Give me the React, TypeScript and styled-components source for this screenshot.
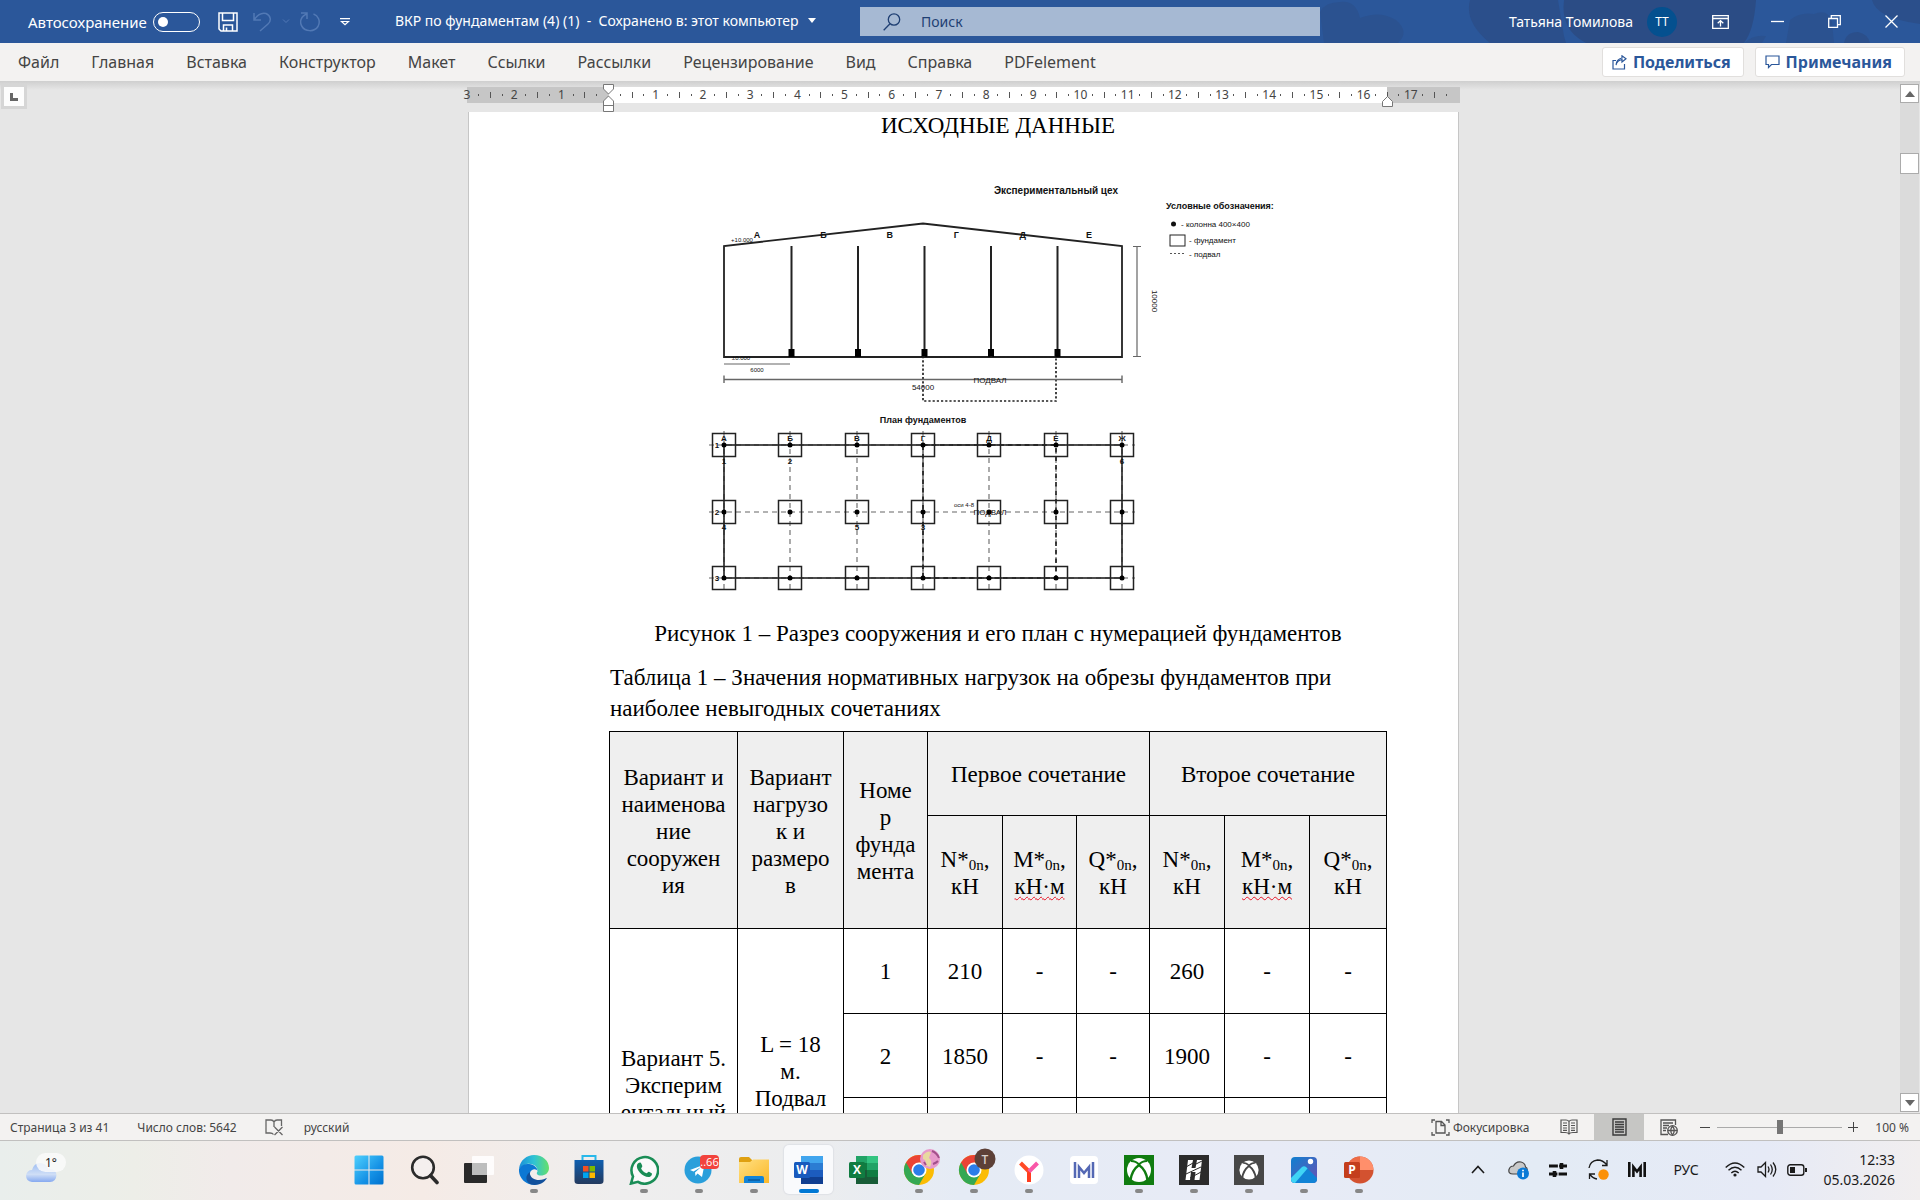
import React from "react";
import styled, { createGlobalStyle } from "styled-components";

const UI = `"Noto Sans", "Segoe UI", sans-serif`;
const SERIF = `"Liberation Serif", "Times New Roman", serif`;
const BLUE = "#2b579a";

const Global = createGlobalStyle`
  *, *::before, *::after { box-sizing: border-box; }
  html, body { margin: 0; height: 100%; overflow: hidden; }
  body { font-family: ${UI}; background: #e6e6e6; }
  button, input { font: inherit; color: inherit; margin: 0; }
  svg { display: block; flex: none; }
`;

const Screen = styled.div`
  display: flex;
  flex-direction: column;
  height: 100vh;
`;

/* ---------- title bar ---------- */

const TitleBar = styled.header`
  display: grid;
  grid-template-columns: minmax(0, 43fr) minmax(0, 23fr) minmax(0, 30fr);
  flex: none;
  height: 43px;
  background: ${BLUE};
  color: #fff;
  font-size: 14px;
`;

const PlainButton = styled.button`
  display: flex;
  align-items: center;
  justify-content: center;
  padding: 0;
  border: 0;
  background: none;
`;

const QuickAccess = styled.div`
  display: flex;
  align-items: center;
  padding-left: 28px;
  white-space: nowrap;
`;

const AutoSave = styled.label`
  display: flex;
  align-items: center;
  gap: 6px;
  margin-right: 18px;
  font-size: 15px;
  line-height: 20px;
`;

const Switch = styled.input`
  appearance: none;
  display: flex;
  align-items: center;
  width: 47px;
  height: 20px;
  padding-left: 4px;
  border: 1px solid #fff;
  border-radius: 10px;
  &::before {
    content: "";
    width: 10px;
    height: 10px;
    border-radius: 50%;
    background: #fff;
  }
`;

const History = styled.div`
  display: flex;
  align-items: center;
  gap: 10px;
  margin: 0 20px 0 14px;
`;

const DocName = styled.button`
  display: flex;
  align-items: center;
  gap: 9px;
  margin-left: 45px;
  padding: 0 0 2px;
  border: 0;
  background: none;
  white-space: pre;
  line-height: 20px;
`;

const SearchBox = styled.label`
  display: flex;
  align-items: center;
  gap: 20px;
  height: 29px;
  margin-top: 7px;
  padding-left: 23px;
  background: #a6b9d3;
  color: #1f3f73;
`;

const SearchInput = styled.input`
  flex: 1;
  min-width: 0;
  padding: 0;
  border: 0;
  outline: 0;
  background: none;
  &::placeholder { color: #1f3f73; opacity: 1; }
`;

const Account = styled.div`
  position: relative;
  display: flex;
  align-items: center;
  justify-content: flex-end;
  overflow: hidden;
`;

const Pattern = styled.svg`
  position: absolute;
  top: 0;
  right: 0;
`;

const UserButton = styled.button`
  position: relative;
  display: flex;
  align-items: center;
  gap: 14px;
  margin-right: 15px;
  padding: 0;
  border: 0;
  background: none;
`;

const Avatar = styled.span`
  width: 30px;
  height: 30px;
  border-radius: 50%;
  background: #04508f;
  font-size: 12px;
  line-height: 30px;
  text-align: center;
`;

const WindowButton = styled(PlainButton)`
  position: relative;
  width: 57px;
  height: 43px;
`;

/* ---------- ribbon tabs ---------- */

const TabBar = styled.nav`
  display: flex;
  align-items: center;
  flex: none;
  height: 38px;
  padding: 0 15px 0 2px;
  background: #f3f2f1;
`;

const Tab = styled.button`
  padding: 0 16px 1px;
  border: 0;
  background: none;
  color: #444;
  font-size: 16px;
  line-height: 24px;
  white-space: nowrap;
`;

const Spacer = styled.div`
  flex: 1;
`;

const RibbonAction = styled.button`
  display: flex;
  align-items: center;
  gap: 6px;
  height: 30px;
  margin-left: 11px;
  padding: 0 12px 0 9px;
  border: 1px solid #e1dfdd;
  border-radius: 3px;
  background: #fff;
  color: ${BLUE};
  font-size: 16px;
  font-weight: 700;
  line-height: 24px;
`;

/* ---------- document area ---------- */

const Workspace = styled.div`
  display: flex;
  flex: 1;
  min-height: 0;
  background: linear-gradient(#cfcfcf, #e6e6e6 9px);
`;

const SideRuler = styled.div`
  flex: none;
  width: 27px;
  padding: 3px 0 0 1px;
`;

const TabStop = styled(PlainButton)`
  width: 26px;
  height: 25px;
  border: 3px solid #d6d6d6;
  background: #fdfdfd;
`;

const DocColumn = styled.main`
  display: flex;
  flex: 1;
  flex-direction: column;
  align-items: center;
  min-width: 0;
  overflow: hidden;
`;

const Ruler = styled.div`
  position: relative;
  display: flex;
  flex: none;
  align-items: center;
  justify-content: space-between;
  width: 993px;
  height: 16px;
  margin: 6px 0 9px;
  padding-right: 2px;
  background: linear-gradient(90deg, #c6c6c6 142px, #fff 142px, #fff 920px, #c6c6c6 920px);
  color: #444;
  font-size: 12px;
  line-height: 16px;
`;

const Mark = styled.span<{ $kind: "dot" | "tick" | "num" | "none" }>`
  display: flex;
  justify-content: center;
  width: 0;
  &::before {
    content: "";
    flex: none;
    width: ${(p) => (p.$kind === "dot" || p.$kind === "tick" ? 1 : 0)}px;
    height: ${(p) => (p.$kind === "tick" ? 6 : 2)}px;
    background: #555;
  }
`;

const Indent = styled.svg<{ $x: number; $y: number }>`
  position: absolute;
  left: ${(p) => p.$x}px;
  top: ${(p) => p.$y}px;
`;

const Sheet = styled.article`
  flex: none;
  width: 991px;
  padding: 0 71px 0 140px;
  border: solid #c6c6c6;
  border-width: 0 1px;
  background: #fff;
  color: #000;
  font-family: ${SERIF};
  font-size: 23px;
  line-height: 31px;
`;

const Heading = styled.h1`
  margin: 0;
  font-size: 23px;
  font-weight: 400;
  line-height: 27px;
  text-align: center;
`;

const Figure = styled.figure`
  margin: 0 0 13px;
  text-align: center;
  svg { width: 100%; height: auto; }
`;

const Loads = styled.table`
  width: 100%;
  border-collapse: collapse;
  table-layout: fixed;
  line-height: 27px;
  text-align: center;
  caption {
    padding: 0 0 7px 1px;
    line-height: 31px;
    text-align: left;
  }
`;

const Row = styled.tr<{ $h: number }>`
  height: ${(p) => p.$h}px;
`;

const Head = styled.th`
  padding: 2px 0 0;
  border: 1px solid #000;
  background: #efefef;
  font-weight: 400;
  sub {
    font-size: 15px;
    line-height: 0;
    vertical-align: -3px;
  }
`;

const Cell = styled.td`
  padding: 1px 0 0;
  border: 1px solid #000;
`;

const Misspelt = styled.span`
  text-decoration: underline wavy #e81123 1px;
  text-underline-offset: 2px;
  text-decoration-skip-ink: none;
`;

const ScrollBar = styled.div`
  display: flex;
  flex: none;
  flex-direction: column;
  width: 20px;
  padding: 3px 1px 1px 0;
`;

const ScrollButton = styled(PlainButton)`
  width: 19px;
  height: 19px;
  border: 1px solid #ababab;
  background: #fff;
`;

const ScrollTrack = styled.div`
  flex: 1;
  padding-top: 50px;
  background: #dbdbdb;
`;

const ScrollThumb = styled.div`
  height: 21px;
  border: 1px solid #ababab;
  background: #fff;
`;

/* ---------- status bar ---------- */

const StatusBar = styled.footer`
  display: flex;
  align-items: center;
  flex: none;
  height: 28px;
  padding: 0 11px 0 10px;
  border: solid #c1c0bf;
  border-width: 1px 0;
  background: #f3f2f1;
  color: #444;
  font-size: 12px;
  white-space: nowrap;
`;

const StatusItem = styled.button<{ $gap?: number }>`
  display: flex;
  align-items: center;
  gap: 3px;
  margin-right: ${(p) => p.$gap ?? 28}px;
  padding: 0;
  border: 0;
  background: none;
`;

const ZoomValue = styled.button`
  margin-left: 17px;
  padding: 0;
  border: 0;
  background: none;
`;

const ViewButton = styled(PlainButton)<{ $on?: boolean }>`
  width: 50px;
  height: 26px;
  background: ${(p) => (p.$on ? "#c6c6c4" : "none")};
`;

const ZoomRange = styled.input`
  appearance: none;
  width: 125px;
  height: 14px;
  margin: 0 6px;
  background: linear-gradient(#aaa, #aaa) center / 100% 1px no-repeat;
  &::-webkit-slider-thumb {
    appearance: none;
    width: 6px;
    height: 14px;
    background: #757575;
  }
`;

/* ---------- taskbar ---------- */

const TaskBar = styled.footer`
  display: flex;
  align-items: center;
  flex: none;
  height: 59px;
  padding: 0 25px 2px 0;
  background: linear-gradient(90deg, #e9eeec, #edeee8 7%, #f1ebea 12%, #f5ebe6 22%, #efeeee 32%, #ecedee 42%, #e5ebf5 50%, #e8ebf6 66%, #e3ebf5 80%, #e6eaf6 92%, #f1eeef);
  color: #1b1b1b;
  font-size: 14px;
`;

const Weather = styled(PlainButton)`
  width: 92px;
  height: 50px;
`;

const Apps = styled.div`
  display: flex;
  align-items: center;
  margin-left: 249px;
`;

const AppButton = styled.button<{ $state?: "open" | "active" }>`
  display: flex;
  flex-direction: column;
  align-items: center;
  width: ${(p) => (p.$state === "active" ? 49 : 55)}px;
  height: 49px;
  margin: ${(p) => (p.$state === "active" ? "0 3px" : "0")};
  padding: 10px 0 0;
  border: 0;
  border-radius: 5px;
  background: ${(p) => (p.$state === "active" ? "#f9fafc" : "none")};
  box-shadow: ${(p) => (p.$state === "active" ? "0 0 1px 1px #dfe1e6" : "none")};
  &::after {
    content: "";
    width: ${(p) => (p.$state === "active" ? 20 : 8)}px;
    height: 4px;
    margin-top: 4px;
    border-radius: 2px;
    background: ${(p) => (p.$state === "active" ? "#0078d4" : p.$state ? "#878787" : "none")};
  }
`;

const Tray = styled.div`
  display: flex;
  align-items: center;
`;

const TrayButton = styled(PlainButton)<{ $w: number }>`
  width: ${(p) => p.$w}px;
  height: 40px;
`;

const Clock = styled.button`
  width: 81px;
  padding: 0;
  border: 0;
  background: none;
  line-height: 20px;
  text-align: right;
`;

/* ---------- drawing of the building ---------- */

const AXES = [724, 790, 857, 923, 989, 1056, 1122];
const ROWS = [445, 512, 578];
const BAYS = ["А", "Б", "В", "Г", "Д", "Е"];

function BuildingDrawing() {
  return (
    <svg viewBox="609 139 778 479" fontFamily="Liberation Sans, Arial, sans-serif" fill="none" stroke="#222">
      <path d="M724 357V246L923 223.500L1122 246V357Z" strokeWidth="1.800" />
      <path d="M791.500 246V357M858 246V357M924.500 246V357M991 246V357M1057.500 246V357" strokeWidth="2" />
      {[791.5, 858, 924.5, 991, 1057.5].map((x) => (
        <rect key={x} x={x - 3} y="349" width="6" height="8" fill="#000" stroke="none" />
      ))}
      <path d="M923 357H1056V401H923Z" strokeWidth="1.700" strokeDasharray="2.200 2" />
      <g stroke="#666">
        <path d="M724 364H790M1137 246V357M1133 246.500H1141M1133 356.500H1141" strokeWidth="1.200" />
        <path d="M724 379.500H1122M724 375.500V383M1122 375.500V383" strokeWidth="1.400" />
      </g>
      <g fill="#111" stroke="none" textAnchor="middle">
        {BAYS.map((l, i) => (
          <text key={l} x={757 + i * 66.4} y="238" fontSize="9" fontWeight="700">{l}</text>
        ))}
        <text x="742" y="242" fontSize="6">+10.000</text>
        <text x="741" y="360" fontSize="6">±0.000</text>
        <text x="757" y="372" fontSize="6">6000</text>
        <text x="990" y="383" fontSize="8">ПОДВАЛ</text>
        <text x="923" y="390" fontSize="8">54000</text>
        <text transform="translate(1152 301) rotate(90)" fontSize="8">10000</text>
        <text x="1056" y="194" fontSize="10" fontWeight="700">Экспериментальный цех</text>
        <text x="923" y="423" fontSize="9" fontWeight="700">План фундаментов</text>
      </g>
      <g fill="#111" stroke="none" fontSize="8">
        <text x="1166" y="209" fontSize="9" fontWeight="700">Условные обозначения:</text>
        <circle cx="1173.500" cy="224" r="2.500" />
        <text x="1181" y="227">- колонна 400×400</text>
        <text x="1189" y="243">- фундамент</text>
        <text x="1189" y="257">- подвал</text>
      </g>
      <rect x="1170" y="235" width="15" height="11" strokeWidth="1" />
      <path d="M1170 253.500H1185" strokeDasharray="2 2" stroke="#555" />

      <g stroke="#666" strokeWidth="1.100" strokeDasharray="5 4">
        {AXES.map((x) => <path key={x} d={`M${x} 431V590`} />)}
        {ROWS.map((y) => <path key={y} d={`M709 ${y}H1135`} />)}
      </g>
      <rect x="724" y="445" width="398" height="133" strokeWidth="1.600" />
      <path d="M923 445V578" stroke="#777" strokeWidth="1.400" />
      <path d="M923 445H1056V578H923Z" strokeWidth="1.700" strokeDasharray="4.500 4" />
      {ROWS.map((y) => AXES.map((x) => (
        <g key={`${x}-${y}`}>
          <rect x={x - 11.5} y={y - 11.5} width="23" height="23" strokeWidth="1.500" />
          <circle cx={x} cy={y} r="2.500" fill="#000" stroke="none" />
        </g>
      )))}
      <g fill="#111" stroke="none" fontSize="8" fontWeight="700" textAnchor="middle">
        {[...BAYS, "Ж"].map((l, i) => <text key={l} x={AXES[i]} y="441">{l}</text>)}
        {ROWS.map((y, i) => <text key={y} x="717" y={y + 3}>{i + 1}</text>)}
        <text x="724" y="464">1</text>
        <text x="790" y="464">2</text>
        <text x="1122" y="464">6</text>
        <text x="724" y="530">4</text>
        <text x="857" y="530">5</text>
        <text x="923" y="530">3</text>
        <text x="964" y="507" fontSize="6" fontWeight="400">оси 4-8</text>
        <text x="990" y="515" fontWeight="400">ПОДВАЛ</text>
      </g>
    </svg>
  );
}

/* ---------- application icons ---------- */

function OfficeIcon({ letter, tile, bands }: { letter: string; tile: string; bands: string[] }) {
  return (
    <svg width="30" height="30" viewBox="0 0 30 30">
      {bands.map((c, i) => <rect key={c} x="7" y={1 + i * 7} width="22" height="7" fill={c} />)}
      <rect x="0" y="7" width="16" height="16" rx="1.500" fill={tile} />
      <text x="8" y="19" fill="#fff" fontFamily="Open Sans, sans-serif" fontSize="12" fontWeight="700" textAnchor="middle">{letter}</text>
    </svg>
  );
}

const ExcelIcon = () => (
  <svg width="30" height="30" viewBox="0 0 30 30">
    <path fill="#21a366" d="M7 1h11v7H7z" /><path fill="#33c481" d="M18 1h11v7H18z" />
    <path fill="#107c41" d="M7 8h11v7H7z" /><path fill="#21a366" d="M18 8h11v7H18z" />
    <path fill="#185c37" d="M7 15h11v14H7z" /><path fill="#107c41" d="M18 15h11v7H18z" /><path fill="#185c37" d="M18 22h11v7H18z" />
    <rect y="7" width="16" height="16" rx="1.500" fill="#107c41" />
    <text x="8" y="19" fill="#fff" fontFamily="Open Sans, sans-serif" fontSize="12" fontWeight="700" textAnchor="middle">X</text>
  </svg>
);

const PowerPointIcon = () => (
  <svg width="30" height="30" viewBox="0 0 30 30">
    <circle cx="16" cy="15" r="13.500" fill="#d35230" />
    <path d="M16 1.500A13.500 13.500 0 0 1 29.500 15H16Z" fill="#ff8f6b" />
    <path d="M16 1.500A13.500 13.500 0 0 0 2.500 15H16Z" fill="#ed6c47" />
    <rect y="7" width="16" height="16" rx="1.500" fill="#c43e1c" />
    <text x="8" y="19" fill="#fff" fontFamily="Open Sans, sans-serif" fontSize="12" fontWeight="700" textAnchor="middle">P</text>
  </svg>
);

function ChromeIcon({ children }: { children: React.ReactNode }) {
  return (
    <svg width="36" height="30" viewBox="-3 0 36 30" overflow="visible">
      <circle cx="15" cy="15" r="15" fill="#fbbc04" />
      <path d="M15 15L2 7.500A15 15 0 0 0 15 30L21.500 18.700Z" fill="#34a853" />
      <path d="M15 15L8.500 18.800L2 7.500A15 15 0 0 1 28 7.500H15Z" fill="#ea4335" />
      <circle cx="15" cy="15" r="7.500" fill="#fff" />
      <circle cx="15" cy="15" r="5.800" fill="#2b7de9" />
      {children}
    </svg>
  );
}

function XboxIcon({ bg, r }: { bg: string; r: number }) {
  return (
    <svg width="30" height="30" viewBox="0 0 30 30">
      <rect width="30" height="30" fill={bg} />
      <circle cx="15" cy="15" r={r} fill="#fff" />
      <g transform={`translate(15 15) scale(${r / 12})`} stroke={bg} fill="none">
        <path d="M-8 -9Q-3 -9 0 -5.500Q3 -9 8 -9" strokeWidth="2" />
        <path d="M0 -5Q-7 0 -8.500 10M0 -5Q7 0 8.500 10" strokeWidth="2.400" />
      </g>
    </svg>
  );
}

const icons: { name: string; state?: "open" | "active"; icon: React.ReactNode }[] = [
  {
    name: "Пуск",
    icon: (
      <svg width="30" height="30" viewBox="0 0 30 30">
        <defs><linearGradient id="win" x1="0" y1="0" x2="1" y2="1"><stop stopColor="#4fd0fd" /><stop offset=".6" stopColor="#1592e6" /><stop offset="1" stopColor="#0071cf" /></linearGradient></defs>
        <path fill="url(#win)" d="M2 .5H14.500V14.500H.5V2Q.5 .5 2 .5ZM15.500 .5H28Q29.500 .5 29.500 2V14.500H15.500ZM.5 15.500H14.500V29.500H2Q.5 29.500 .5 28ZM15.500 15.500H29.500V28Q29.500 29.500 28 29.500H15.500Z" />
      </svg>
    ),
  },
  {
    name: "Поиск",
    icon: (
      <svg width="30" height="30" viewBox="0 0 30 30" fill="none" stroke="#2b2b2b">
        <circle cx="14" cy="12.500" r="10.800" strokeWidth="2.600" fill="#f4efee" />
        <path d="M21.500 20.500L28 27.500" strokeWidth="3.600" strokeLinecap="round" />
      </svg>
    ),
  },
  {
    name: "Представление задач",
    icon: (
      <svg width="30" height="30" viewBox="0 0 30 30">
        <rect x="0" y="8" width="23" height="20" rx="1" fill="#2a2a2a" />
        <rect x="8" y="1" width="22" height="19" rx="1" fill="#fff" opacity=".85" />
        <path d="M8 8H23V20H8Z" fill="#bdbdbd" />
      </svg>
    ),
  },
  {
    name: "Edge",
    state: "open",
    icon: (
      <svg width="30" height="30" viewBox="0 0 30 30">
        <defs>
          <linearGradient id="edgeTop" x1="0" x2="1"><stop stopColor="#1b8fd9" /><stop offset=".5" stopColor="#2fc3d4" /><stop offset="1" stopColor="#66e06a" /></linearGradient>
        </defs>
        <path d="M0 14C1 5 8 0 15 0C24 0 30 6 30 13C30 18 26 20.500 22 20.500C18 20.500 17 18.500 18.500 16.500C19 11 13 8 8 9C4 10 1.500 12 0 14Z" fill="url(#edgeTop)" />
        <path d="M0 14C2 10 6 8.500 10 9C15 9.500 18.500 12.500 18.500 16C18 13.500 12 13 11 18C10.500 24 16 28 22 27C19 30 14 30.500 10 29C3 26.500 -.5 20 0 14Z" fill="#0c78d4" />
        <path d="M11 17C10 22 15 25 20 25C24 25 26 23.500 28 23C25 28.500 18 31 12 29.500C6 27 6 20 11 17Z" fill="#12509b" />
      </svg>
    ),
  },
  {
    name: "Microsoft Store",
    icon: (
      <svg width="30" height="30" viewBox="0 0 30 30">
        <defs><linearGradient id="store" y1="0" x1="0" x2="0" y2="1"><stop stopColor="#0f5fb0" /><stop offset="1" stopColor="#243a5e" /></linearGradient></defs>
        <path d="M8.500 6V1H21.500V6" fill="none" stroke="#28b8ea" strokeWidth="2" />
        <path d="M.5 5H29.500V26Q29.500 29 26 29H4Q.5 29 .5 26Z" fill="url(#store)" />
        <path fill="#f25022" d="M9 11h5.500v5.500H9z" /><path fill="#7fba00" d="M15.500 11H21v5.500h-5.500z" />
        <path fill="#00a4ef" d="M9 17.500h5.500V23H9z" /><path fill="#ffb900" d="M15.500 17.500H21V23h-5.500z" />
      </svg>
    ),
  },
  {
    name: "WhatsApp",
    state: "open",
    icon: (
      <svg width="30" height="30" viewBox="0 0 30 30">
        <path d="M2 28.500L4 21.500A13.300 13.300 0 1 1 9 26.800Z" fill="#fafafa" stroke="#1a8d56" strokeWidth="2.600" />
        <path d="M9.500 8C11 7 12 7.500 12.500 9L13.300 11C13.500 12 12 13 12.200 13.700C13.500 16 15 17.500 17.500 18.300C18.300 18.300 19 16.500 20 16.800L22.700 18.200C23.500 19 22.500 21.500 20.500 22C14.500 23 6.500 14.500 8 10Q8.500 8.500 9.500 8Z" fill="#1a8d56" />
      </svg>
    ),
  },
  {
    name: "Telegram",
    state: "open",
    icon: (
      <svg width="30" height="30" viewBox="0 0 30 30" overflow="visible">
        <circle cx="14" cy="15" r="13.500" fill="#2a9fdb" />
        <path d="M6 15L20.500 9.500L18 22L13.500 18.500L11.500 21L11 17.500L17 12L9.500 16.500Z" fill="#fff" />
        <rect x="16" y="0" width="19" height="14" rx="4" fill="#f2433d" />
        <text x="25.500" y="11" fill="#fff" fontFamily="Open Sans, sans-serif" fontSize="11" textAnchor="middle">..66</text>
      </svg>
    ),
  },
  {
    name: "Проводник",
    state: "open",
    icon: (
      <svg width="30" height="30" viewBox="0 0 30 30">
        <defs><linearGradient id="folder" x1="0" y1="0" x2="1" y2="1"><stop stopColor="#ffe082" /><stop offset="1" stopColor="#fbb829" /></linearGradient></defs>
        <path d="M0 4Q0 2 2 2H10L13 5V9H0Z" fill="#dfa011" />
        <path d="M0 7H11L14 4.500H30V28H0Z" fill="url(#folder)" />
        <path d="M5 28V23Q5 21 7 21H23Q25 21 25 23V28Z" fill="#1384d8" />
        <path d="M9 25H21" stroke="#0b5a9d" strokeWidth="1.500" />
      </svg>
    ),
  },
  { name: "Word", state: "active", icon: <OfficeIcon letter="W" tile="#185abd" bands={["#41a5ee", "#2b7cd3", "#1c5cbe", "#103f91"]} /> },
  { name: "Excel", icon: <ExcelIcon /> },
  {
    name: "Chrome",
    state: "open",
    icon: (
      <ChromeIcon>
        <circle cx="26" cy="4" r="10" fill="#e79acb" />
        <path d="M19 0Q23 -5 27 -3L25 3Q29 6 26 12L21 10Q23 5 19 4Z" fill="#e8d9a0" />
        <path d="M28 -4Q33 -2 35 3M29 9Q32 8 34 6M20 7L22 10" stroke="#a2508b" strokeWidth="2" fill="none" />
      </ChromeIcon>
    ),
  },
  {
    name: "Chrome, профиль Т",
    state: "open",
    icon: (
      <ChromeIcon>
        <circle cx="26" cy="4" r="10.500" fill="#5d4037" />
        <text x="26" y="9" fill="#d8cfcb" fontFamily="Open Sans, sans-serif" fontSize="12" fontWeight="600" textAnchor="middle">T</text>
      </ChromeIcon>
    ),
  },
  {
    name: "Яндекс Браузер",
    state: "open",
    icon: (
      <svg width="30" height="30" viewBox="0 0 30 30">
        <circle cx="15" cy="15" r="14.500" fill="#fff" />
        <path d="M15 16V27" stroke="#ff3c1f" strokeWidth="4" />
        <path d="M6.500 8L15 16.500" stroke="#ff4a26" strokeWidth="4" />
        <path d="M23.500 8L15 16.500" stroke="#f957a8" strokeWidth="4" />
      </svg>
    ),
  },
  {
    name: "MAX",
    icon: (
      <svg width="30" height="30" viewBox="0 0 30 30">
        <rect x="1" y="1" width="28" height="28" rx="4" fill="#fff" />
        <path d="M6 7V23M24 7V23M10 23V12L15 18L20 12V23" stroke="#5468b4" strokeWidth="2.500" fill="none" />
      </svg>
    ),
  },
  { name: "Xbox", state: "open", icon: <XboxIcon bg="#107c10" r={12} /> },
  {
    name: "H",
    state: "open",
    icon: (
      <svg width="30" height="30" viewBox="0 0 30 30">
        <rect width="30" height="30" fill="#2b2b2b" />
        <path d="M9 5H14L12.500 13H16.500L18 5H23L20.500 25H15.500L16.500 17H12L11 25H6.500Z" fill="#fff" />
        <path d="M7 12L14 8M7 19L22 12M11 23L22 17M17 9L23 6" stroke="#2b2b2b" strokeWidth="1" />
      </svg>
    ),
  },
  { name: "Xbox Game Bar", state: "open", icon: <XboxIcon bg="#474747" r={9.6} /> },
  {
    name: "Фотографии",
    state: "open",
    icon: (
      <svg width="30" height="30" viewBox="0 0 30 30">
        <defs><linearGradient id="photo" x1="0" y1="0" x2="1" y2="1"><stop stopColor="#0f80d0" /><stop offset="1" stopColor="#6a52b4" /></linearGradient></defs>
        <rect x="2" y="2" width="26" height="26" rx="4" fill="url(#photo)" />
        <path d="M2 23L13 12Q15 10.500 17 12L28 23V24Q28 28 24 28H6Q2 28 2 24Z" fill="#1183d6" />
        <path d="M2 23L13 12Q15 10.500 17 12L18.500 13.500L6 28Q2 28 2 24Z" fill="#3fd4f5" />
        <circle cx="21.500" cy="6.500" r="2.700" fill="#fff" />
      </svg>
    ),
  },
  { name: "PowerPoint", state: "open", icon: <PowerPointIcon /> },
];

const tabs = ["Файл", "Главная", "Вставка", "Конструктор", "Макет", "Ссылки", "Рассылки", "Рецензирование", "Вид", "Справка", "PDFelement"];
const columns = [128, 106, 84, 75, 74, 73, 75, 85, 77];

function RulerMarks() {
  return (
    <>
      {Array.from({ length: 85 }, (_, i) => {
        const value = Math.abs(i / 4 - 3);
        if (i === 84 || i === 12) return <Mark key={i} $kind="none" />;
        if (i % 4 === 0) return <Mark key={i} $kind="num">{value}</Mark>;
        return <Mark key={i} $kind={i % 2 ? "dot" : "tick"} />;
      })}
    </>
  );
}

function Lines({ of }: { of: string[] }) {
  return <>{of.map((line, i) => <React.Fragment key={i}>{i > 0 && <br />}{line}</React.Fragment>)}</>;
}

function LoadHeads() {
  return (
    <>
      <Head scope="col">N*<sub>0n</sub>,<br />кН</Head>
      <Head scope="col">M*<sub>0n</sub>,<br /><Misspelt>кН·м</Misspelt></Head>
      <Head scope="col">Q*<sub>0n</sub>,<br />кН</Head>
    </>
  );
}

function ValueCells({ values }: { values: string[] }) {
  return <>{values.map((v, i) => <Cell key={i}>{v}</Cell>)}</>;
}

export default function App() {
  return (
    <Screen>
      <Global />
      <TitleBar>
        <QuickAccess>
          <AutoSave>
            Автосохранение
            <Switch type="checkbox" role="switch" />
          </AutoSave>
          <PlainButton aria-label="Сохранить">
            <svg width="20" height="20" viewBox="0 0 20 20" fill="none" stroke="#fff" strokeWidth="1.500">
              <path d="M1 1H19V19H3L1 17ZM4.500 1V8.500H15.500V1M5.500 19V13H14.500V19M8.500 15.500V19" />
            </svg>
          </PlainButton>
          <History>
            <PlainButton aria-label="Отменить">
              <svg width="20" height="20" viewBox="0 0 20 20" fill="none" stroke="#5279b5" strokeWidth="1.500">
                <path d="M2 1V8H9M2 8C6 2 10 .5 14 1.500C19 3.500 19.500 9 16 12L8 19" />
              </svg>
            </PlainButton>
            <PlainButton aria-label="Список отмены">
              <svg width="8" height="5" viewBox="0 0 8 5" fill="none" stroke="#5279b5"><path d="M1 .5L4 3.500L7 .5" /></svg>
            </PlainButton>
            <PlainButton aria-label="Повторить">
              <svg width="20" height="20" viewBox="0 0 20 20" fill="none" stroke="#5279b5" strokeWidth="1.500">
                <path d="M1 1H7V7M7 2C1 4 -1 10 2 14.500C5 19.500 14 20.500 18 14.500C21 9 18 3.500 13.500 2" />
              </svg>
            </PlainButton>
          </History>
          <PlainButton aria-label="Настройка панели">
            <svg width="10" height="8" viewBox="0 0 10 8" fill="none" stroke="#fff" strokeWidth="1.200"><path d="M0 .7H10M1.500 3.500H8.500L5 6.800Z" /></svg>
          </PlainButton>
          <DocName>
            {"ВКР по фундаментам (4) (1)  -  Сохранено в: этот компьютер"}
            <svg width="8" height="5" viewBox="0 0 8 5"><path d="M0 0H8L4 5Z" fill="#fff" /></svg>
          </DocName>
        </QuickAccess>
        <SearchBox>
          <svg width="18" height="18" viewBox="0 0 18 18" fill="none" stroke="#1f3f73" strokeWidth="1.300">
            <circle cx="11" cy="6.500" r="5.700" /><path d="M7 10.700L.7 17.300" />
          </svg>
          <SearchInput placeholder="Поиск" aria-label="Поиск" />
        </SearchBox>
        <Account>
          <Pattern width="600" height="43" viewBox="0 0 600 43" aria-hidden="true">
            <path d="M0 12Q5 2 20 2Q36 0 40 18Q60 10 76 20Q90 32 78 43H4Z" fill="#2b5290" />
            <path d="M150 0H238L244 36L246 43H170Q144 22 150 0Z" fill="#2b4f8b" />
            <path d="M244 0H436Q434 30 424 43H266Q240 30 244 0Z" fill="#2b4c85" />
            <path d="M424 43Q434 34 446 36L442 43ZM470 20Q480 12 494 14Q508 8 512 22L514 43H466Z" fill="#2b5290" />
            <path d="M524 43Q526 32 538 32Q548 34 550 43ZM552 0Q556 18 600 24V0Z" fill="#2b4f8b" />
          </Pattern>
          <UserButton>Татьяна Томилова<Avatar>ТТ</Avatar></UserButton>
          <WindowButton aria-label="Параметры отображения ленты">
            <svg width="17" height="14" viewBox="0 0 17 14" fill="none" stroke="#fff" strokeWidth="1.300"><path d="M.7 .7H16.300V13.300H.7ZM.7 3.500H16.300M8.500 11.500V6M5.700 8.200L8.500 5.600L11.300 8.200" /></svg>
          </WindowButton>
          <WindowButton aria-label="Свернуть">
            <svg width="13" height="13" viewBox="0 0 13 13" stroke="#fff" strokeWidth="1.300"><path d="M0 6.500H13" /></svg>
          </WindowButton>
          <WindowButton aria-label="Восстановить">
            <svg width="13" height="13" viewBox="0 0 13 13" fill="none" stroke="#fff" strokeWidth="1.300"><path d="M.7 3.500H9.500V12.300H.7ZM3.300 3.500V.7H12.300V9.700H9.500" /></svg>
          </WindowButton>
          <WindowButton aria-label="Закрыть">
            <svg width="13" height="13" viewBox="0 0 13 13" stroke="#fff" strokeWidth="1.300"><path d="M.5 .5L12.500 12.500M12.500 .5L.5 12.500" /></svg>
          </WindowButton>
        </Account>
      </TitleBar>

      <TabBar>
        {tabs.map((t) => <Tab key={t}>{t}</Tab>)}
        <Spacer />
        <RibbonAction>
          <svg width="15" height="15" viewBox="0 0 15 15" fill="none" stroke={BLUE} strokeWidth="1.200"><path d="M4 5.500H1V14H12.500V9M4 10Q5 5.500 10 4.500V7L14 3.700L10 .8V3Q4.500 4 4 10Z" /></svg>
          Поделиться
        </RibbonAction>
        <RibbonAction>
          <svg width="15" height="14" viewBox="0 0 15 14" fill="none" stroke={BLUE} strokeWidth="1.200"><path d="M1 1H14V9.500H6.500L3.500 12.500V9.500H1Z" /></svg>
          Примечания
        </RibbonAction>
      </TabBar>

      <Workspace>
        <SideRuler>
          <TabStop aria-label="Табуляция">
            <svg width="8" height="8" viewBox="0 0 8 8"><path d="M1.500 0V6.500H8" fill="none" stroke="#666" strokeWidth="3" /></svg>
          </TabStop>
        </SideRuler>
        <DocColumn>
          <Ruler>
            <RulerMarks />
            <Indent $x={136} $y={-3} width="11" height="28" viewBox="0 0 11 28" fill="#fff" stroke="#777">
              <path d="M.5 .5H10.500V5L5.500 10L.5 5ZM5.500 12L10.500 17V27.500H.5V17ZM.5 21.500H10.500" />
            </Indent>
            <Indent $x={915} $y={9} width="11" height="11" viewBox="0 0 11 11" fill="#fff" stroke="#777">
              <path d="M5.500 .5L10.500 5.500V10.500H.5V5.500Z" />
            </Indent>
          </Ruler>
          <Sheet>
            <Heading>ИСХОДНЫЕ ДАННЫЕ</Heading>
            <Figure>
              <BuildingDrawing />
              <figcaption>Рисунок 1 – Разрез сооружения и его план с нумерацией фундаментов</figcaption>
            </Figure>
            <Loads>
              <caption>Таблица 1 – Значения нормативных нагрузок на обрезы фундаментов при наиболее невыгодных сочетаниях</caption>
              <colgroup>{columns.map((w, i) => <col key={i} style={{ width: w }} />)}</colgroup>
              <thead>
                <Row $h={84}>
                  <Head rowSpan={2}><Lines of={["Вариант и", "наименова", "ние", "сооружен", "ия"]} /></Head>
                  <Head rowSpan={2}><Lines of={["Вариант", "нагрузо", "к и", "размеро", "в"]} /></Head>
                  <Head rowSpan={2}><Lines of={["Номе", "р", "фунда", "мента"]} /></Head>
                  <Head colSpan={3}>Первое сочетание</Head>
                  <Head colSpan={3}>Второе сочетание</Head>
                </Row>
                <Row $h={113}><LoadHeads /><LoadHeads /></Row>
              </thead>
              <tbody>
                <Row $h={85}>
                  <Cell rowSpan={4}><Lines of={["Вариант 5.", "Эксперим", "ентальный", "цех"]} /></Cell>
                  <Cell rowSpan={4}><Lines of={["L = 18", "м.", "Подвал", "в осях", "Г-Е"]} /></Cell>
                  <ValueCells values={["1", "210", "-", "-", "260", "-", "-"]} />
                </Row>
                <Row $h={84}><ValueCells values={["2", "1850", "-", "-", "1900", "-", "-"]} /></Row>
                <Row $h={85}><ValueCells values={["", "", "", "", "", "", ""]} /></Row>
                <Row $h={85}><ValueCells values={["", "", "", "", "", "", ""]} /></Row>
              </tbody>
            </Loads>
          </Sheet>
        </DocColumn>
        <ScrollBar>
          <ScrollButton aria-label="Вверх"><svg width="10" height="6" viewBox="0 0 10 6"><path d="M0 6L5 0L10 6Z" fill="#666" /></svg></ScrollButton>
          <ScrollTrack><ScrollThumb /></ScrollTrack>
          <ScrollButton aria-label="Вниз"><svg width="10" height="6" viewBox="0 0 10 6"><path d="M0 0L5 6L10 0Z" fill="#666" /></svg></ScrollButton>
        </ScrollBar>
      </Workspace>

      <StatusBar>
        <StatusItem>Страница 3 из 41</StatusItem>
        <StatusItem>Число слов: 5642</StatusItem>
        <StatusItem $gap={20} aria-label="Правописание">
          <svg width="19" height="17" viewBox="0 0 19 17" fill="none" stroke="#666" strokeWidth="1.300"><path d="M8.500 15.500Q7.500 14 5 14H1V1H6Q8 1 9 3Q10 1 12 1H16.500V7M9 3V8M9.500 8L17.500 16M17.500 8L9.500 16" /></svg>
        </StatusItem>
        <StatusItem>русский</StatusItem>
        <Spacer />
        <StatusItem $gap={15}>
          <svg width="19" height="17" viewBox="0 0 19 17" fill="none" stroke="#555" strokeWidth="1.300"><path d="M4 1H1V4M15 1H18V4M4 16H1V13M15 16H18V13M5 2.500H10.500L14 6V14H5ZM10 2.500V6.500H14" /></svg>
          Фокусировка
        </StatusItem>
        <ViewButton aria-label="Режим чтения">
          <svg width="18" height="16" viewBox="0 0 18 16" fill="none" stroke="#555" strokeWidth="1.200"><path d="M9 15Q8 13.500 5 13.500H1V1H6Q8 1 9 2.500Q10 1 12 1H17V13.500H13Q10 13.500 9 15ZM9 2.500V15M3 4H7M3 6.500H7M3 9H7M3 11.300H7M11 4H15M11 6.500H15M11 9H15M11 11.300H15" /></svg>
        </ViewButton>
        <ViewButton $on aria-label="Разметка страницы">
          <svg width="15" height="18" viewBox="0 0 15 18" fill="none" stroke="#3b3b3b" strokeWidth="1.400"><path d="M1 1H14V17H1ZM3 4H12M3 6.500H12M3 9H12M3 11.500H12M3 14H12" /></svg>
        </ViewButton>
        <ViewButton aria-label="Веб-документ">
          <svg width="18" height="17" viewBox="0 0 18 17" fill="none" stroke="#555" strokeWidth="1.300"><path d="M8 15.500H1V1H15.500V6M3 4H13M3 6.500H9M3 9H7M3 11.500H6" /><circle cx="12.500" cy="11.500" r="4.800" /><path d="M8 11.500H17M12.500 7Q9 11.500 12.500 16Q16 11.500 12.500 7" /></svg>
        </ViewButton>
        <PlainButton aria-label="Уменьшить">
          <svg width="17" height="10" viewBox="0 0 17 10" stroke="#444"><path d="M6 5.500H16" /></svg>
        </PlainButton>
        <ZoomRange type="range" min={0} max={200} defaultValue={100} aria-label="Масштаб" />
        <PlainButton aria-label="Увеличить">
          <svg width="10" height="10" viewBox="0 0 10 10" stroke="#444"><path d="M0 5.500H10M5.500 0V10" /></svg>
        </PlainButton>
        <ZoomValue>100 %</ZoomValue>
      </StatusBar>

      <TaskBar>
        <Weather aria-label="Погода">
          <svg width="40" height="36" viewBox="0 0 40 36">
            <defs><linearGradient id="cloud" x1="0" y1="0" x2="0" y2="1"><stop stopColor="#9dbdf3" /><stop offset=".6" stopColor="#cfdef6" /><stop offset="1" stopColor="#86a9f0" /></linearGradient></defs>
            <path d="M6 30Q0 29 0 23.500Q1 18 6 18Q8 11 14 11Q20 11 22 17Q30 16 30.500 23Q30 30 24 30Z" fill="url(#cloud)" />
            <rect x="10" y="1" width="30" height="19" rx="9.500" fill="#fafafa" opacity=".85" />
            <text x="25" y="15" fontFamily="Noto Sans, sans-serif" fontSize="12" textAnchor="middle" fill="#222">1°</text>
          </svg>
        </Weather>
        <Apps>
          {icons.map((a) => <AppButton key={a.name} $state={a.state} aria-label={a.name}>{a.icon}</AppButton>)}
        </Apps>
        <Spacer />
        <Tray>
          <TrayButton $w={40} aria-label="Скрытые значки">
            <svg width="14" height="9" viewBox="0 0 14 9" fill="none" stroke="#1b1b1b" strokeWidth="1.600"><path d="M1 8L7 1.500L13 8" /></svg>
          </TrayButton>
          <TrayButton $w={40} aria-label="OneDrive">
            <svg width="21" height="20" viewBox="0 0 21 20"><path d="M5 14Q0 14 1 9.500Q2 6 5.500 6Q8 1 13 2Q17 3 17.500 7Q20 8 19 12L16 14Z" fill="#c9c9c9" stroke="#444" strokeWidth="1.200" /><circle cx="15" cy="13.500" r="6" fill="#0a7ad6" /><path d="M15 12.500V17M15 9.800V11.300" stroke="#fff" strokeWidth="1.700" /></svg>
          </TrayButton>
          <TrayButton $w={40} aria-label="Настройки">
            <svg width="18" height="16" viewBox="0 0 18 16" stroke="#111"><path d="M0 4H18M0 12H18" strokeWidth="3" /><path d="M12.500 1V7M5.500 9V15" strokeWidth="3.600" /><path d="M9.500 2V6M9 10V14" stroke="#e6ecf6" strokeWidth="1.200" /></svg>
          </TrayButton>
          <TrayButton $w={40} aria-label="Обновление">
            <svg width="21" height="21" viewBox="0 0 21 21" fill="none" stroke="#1b1b1b" strokeWidth="1.300"><path d="M1 9Q2 2 9.500 1Q15 1 19 6M19 1V6.500H14M1.500 20V15H7M2 15.500Q5 19.500 9 20" /><circle cx="15.500" cy="15.500" r="5.200" fill="#fb9108" stroke="none" /></svg>
          </TrayButton>
          <TrayButton $w={38} aria-label="MAX">
            <svg width="18" height="15" viewBox="0 0 18 15" fill="none" stroke="#111" strokeWidth="2.600"><path d="M1.300 0V15M16.700 0V15M5.400 15V5L9 9.500L12.600 5V15" /></svg>
          </TrayButton>
          <TrayButton $w={60}>РУС</TrayButton>
          <TrayButton $w={38} aria-label="Wi-Fi">
            <svg width="20" height="15" viewBox="0 0 20 15" fill="none" stroke="#1b1b1b" strokeWidth="1.400"><path d="M.7 5.500Q10 -3.500 19.300 5.500M3.500 8.300Q10 2 16.500 8.300M6.300 11Q10 7.500 13.700 11" /><circle cx="10" cy="13" r="1.600" fill="#1b1b1b" stroke="none" /></svg>
          </TrayButton>
          <TrayButton $w={26} aria-label="Громкость">
            <svg width="20" height="17" viewBox="0 0 20 17" fill="none" stroke="#1b1b1b" strokeWidth="1.300"><path d="M1 6H4L8.500 1.500V15.500L4 11H1ZM11 5.500Q13 8.500 11 11.500M13.500 3.500Q17 8.500 13.500 13.500M16 1.500Q21.500 8.500 16 15.500" /></svg>
          </TrayButton>
          <TrayButton $w={34} aria-label="Батарея">
            <svg width="20" height="12" viewBox="0 0 20 12" fill="none" stroke="#1b1b1b" strokeWidth="1.400"><rect x=".8" y=".8" width="16" height="10.400" rx="2.500" /><path d="M19 4V8" strokeWidth="2" /><rect x="3" y="3" width="5" height="6" fill="#1b1b1b" stroke="none" /></svg>
          </TrayButton>
          <Clock>12:33<br />05.03.2026</Clock>
        </Tray>
      </TaskBar>
    </Screen>
  );
}
